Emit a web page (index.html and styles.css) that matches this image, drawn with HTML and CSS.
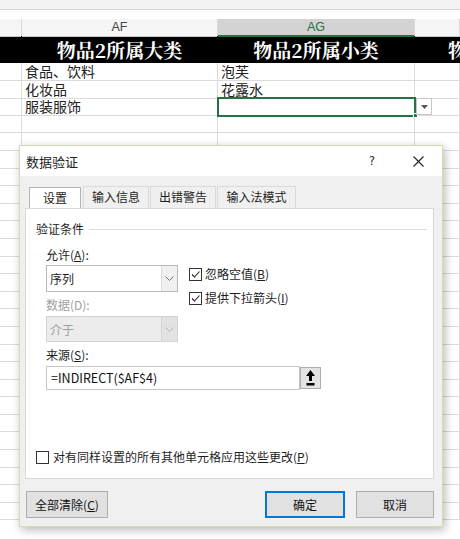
FILE: index.html
```html
<!DOCTYPE html>
<html lang="zh-CN">
<head>
<meta charset="utf-8">
<title>数据验证</title>
<link rel="stylesheet" href="styles.css">
</head>
<body>
<div class="sheet">
  <div class="topstrip"></div>
  <div class="blankstrip"></div>
  <div class="row colhdr"><div></div><div>AF</div><div class="sel">AG</div><div></div></div>
  <div class="row titlerow"><div></div><div>物品2所属大类</div><div>物品2所属小类</div><div class="clipcell">物品3所属大类</div></div>
  <div class="row"><div></div><div>食品、饮料</div><div>泡芙</div><div></div></div>
  <div class="row"><div></div><div>化妆品</div><div>花露水</div><div></div></div>
  <div class="row"><div></div><div>服装服饰</div><div class="active"><span class="handle"></span><span class="cell-dd"><svg width="7" height="4" viewBox="0 0 7 4"><path d="M0 0h7L3.5 4z" fill="#555"/></svg></span></div><div></div></div>
  <div class="row"><div></div><div></div><div></div><div></div></div>
  <div class="row"><div></div><div></div><div></div><div></div></div>
  <div class="row"><div></div><div></div><div></div><div></div></div>
  <div class="row"><div></div><div></div><div></div><div></div></div>
  <div class="row"><div></div><div></div><div></div><div></div></div>
  <div class="row"><div></div><div></div><div></div><div></div></div>
  <div class="row"><div></div><div></div><div></div><div></div></div>
  <div class="row"><div></div><div></div><div></div><div></div></div>
  <div class="row"><div></div><div></div><div></div><div></div></div>
  <div class="row"><div></div><div></div><div></div><div></div></div>
  <div class="row"><div></div><div></div><div></div><div></div></div>
  <div class="row"><div></div><div></div><div></div><div></div></div>
  <div class="row"><div></div><div></div><div></div><div></div></div>
  <div class="row"><div></div><div></div><div></div><div></div></div>
  <div class="row"><div></div><div></div><div></div><div></div></div>
  <div class="row"><div></div><div></div><div></div><div></div></div>
  <div class="row"><div></div><div></div><div></div><div></div></div>
  <div class="row"><div></div><div></div><div></div><div></div></div>
  <div class="row"><div></div><div></div><div></div><div></div></div>
  <div class="row"><div></div><div></div><div></div><div></div></div>
  <div class="row"><div></div><div></div><div></div><div></div></div>
  <div class="row"><div></div><div></div><div></div><div></div></div>
  <div class="row"><div></div><div></div><div></div><div></div></div>
</div>

<div class="dialog">
  <div class="titlebar">
    <span class="title">数据验证</span>
    <span class="help">?</span>
    <span class="close"><svg width="11" height="11" viewBox="0 0 11 11"><path d="M0.5 0.5L10.5 10.5M10.5 0.5L0.5 10.5" stroke="#222" stroke-width="1.1" fill="none"/></svg></span>
  </div>
  <div class="dbody">
    <div class="tabs">
      <div class="tab current">设置</div>
      <div class="tab t2">输入信息</div>
      <div class="tab t3">出错警告</div>
      <div class="tab t4">输入法模式</div>
    </div>
    <div class="panel">
      <div class="group-title"><span>验证条件</span><span class="rule"></span></div>
      <div class="cols">
        <div class="fields">
          <div class="lbl">允许(<u>A</u>):</div>
          <div class="select"><span class="val">序列</span><span class="arrow"><svg width="9" height="5" viewBox="0 0 9 5"><path d="M0.5 0.5L4.5 4.5L8.5 0.5" stroke="#777" stroke-width="1" fill="none"/></svg></span></div>
          <div class="lbl dim">数据(D):</div>
          <div class="select disabled"><span class="val">介于</span><span class="arrow"><svg width="9" height="5" viewBox="0 0 9 5"><path d="M0.5 0.5L4.5 4.5L8.5 0.5" stroke="#b5b5b5" stroke-width="1" fill="none"/></svg></span></div>
        </div>
        <div class="checks">
          <div class="check"><span class="box"><svg width="11" height="11" viewBox="0 0 11 11"><path d="M2 5.5L4.5 8L9.5 2.5" stroke="#222" stroke-width="1.1" fill="none"/></svg></span>忽略空值(<u>B</u>)</div>
          <div class="check"><span class="box"><svg width="11" height="11" viewBox="0 0 11 11"><path d="M2 5.5L4.5 8L9.5 2.5" stroke="#222" stroke-width="1.1" fill="none"/></svg></span>提供下拉箭头(<u>I</u>)</div>
        </div>
      </div>
      <div class="lbl src-lbl">来源(<u>S</u>):</div>
      <div class="source">
        <div class="input">=INDIRECT($AF$4)</div>
        <div class="pick"><svg width="9" height="17" viewBox="0 0 9 17"><path d="M4.5 0L9 6H6V11H3V6H0Z" fill="#000"/><rect x="0.5" y="13" width="8" height="2.5" fill="#000"/></svg></div>
      </div>
      <div class="check apply"><span class="box"></span>对有同样设置的所有其他单元格应用这些更改(<u>P</u>)</div>
    </div>
    <div class="buttons">
      <div class="btn clear">全部清除(<u>C</u>)</div>
      <div class="btn ok">确定</div>
      <div class="btn cancel">取消</div>
    </div>
  </div>
</div>
</body>
</html>
```

FILE: styles.css
```css
* { box-sizing: border-box; }
html, body { margin: 0; padding: 0; }
body {
  width: 460px;
  height: 539px;
  overflow: hidden;
  position: relative;
  background: #fff;
  font-family: "Noto Sans CJK SC", sans-serif;
}

/* ---------- spreadsheet ---------- */
.sheet { width: 460px; overflow: hidden; }
.topstrip { height: 10px; background: #f3f3f3; border-bottom: 1px solid #d6d6d6; }
.blankstrip { height: 9px; background: #fff; }

.row {
  display: grid;
  grid-template-columns: 22px 196px 197px 45px;
  height: 17.6px;
}
.row > div {
  position: relative;
  border-right: 1px solid #dadada;
  border-bottom: 1px solid #dadada;
  padding-left: 3px;
  font-size: 14px;
  line-height: 17px;
  color: #222;
  white-space: nowrap;
}

.colhdr { height: 17px; }
.colhdr > div {
  padding: 0;
  text-align: center;
  background: #f5f5f5;
  font-family: "Liberation Sans", sans-serif;
  font-size: 12.5px;
  line-height: 16px;
  color: #444;
  border-bottom: 1px solid #c8c8c8;
}
.colhdr > .sel {
  background: #d3d3d3;
  color: #217346;
  border-bottom: 2px solid #217346;
}

.titlerow { height: 27px; background: #000; }
.titlerow > div {
  padding: 0;
  text-align: center;
  color: #fff;
  font-family: "Noto Serif CJK SC", "Noto Sans CJK SC", serif;
  font-weight: bold;
  font-size: 19px;
  line-height: 27px;
  border-color: #000;
  overflow: hidden;
}
.titlerow > .clipcell {
  text-align: left;
  padding-left: 33px;
  border-right: none;
}

.row > .active {
  outline: 2px solid #217346;
  outline-offset: -1px;
  z-index: 1;
}
.handle {
  position: absolute;
  right: -4px;
  bottom: -3px;
  width: 5px;
  height: 5px;
  background: #217346;
  border: 1px solid #fff;
}
.cell-dd {
  position: absolute;
  left: 198px;
  top: 0;
  width: 16px;
  height: 17px;
  background: #fff;
  border: 1px solid #c6c6c6;
  display: flex;
  align-items: center;
  justify-content: center;
}

/* ---------- dialog ---------- */
.dialog {
  position: absolute;
  left: 19px;
  top: 145px;
  width: 424px;
  height: 382px;
  background: #f0f0f0;
  border: 1px solid #d9d9ad;
  box-shadow: 2px 3px 9px rgba(0, 0, 0, 0.28);
  display: flex;
  flex-direction: column;
  font-size: 12px;
  color: #1e1e1e;
}
.titlebar {
  height: 30px;
  background: #fff;
  display: flex;
  align-items: center;
  padding-left: 6px;
}
.title { flex: 1; font-size: 13px; color: #222; }
.help {
  width: 30px;
  margin-right: 8px;
  text-align: center;
  font-family: "DejaVu Sans", sans-serif;
  font-size: 12px;
  color: #333;
}
.close {
  width: 46px;
  margin-right: 1px;
  display: flex;
  justify-content: center;
}

.dbody {
  flex: 1;
  display: flex;
  flex-direction: column;
  padding: 10px 8px 0 5px;
}
.tabs { display: flex; height: 22px; padding-left: 4px; }
.tab {
  height: 22px;
  line-height: 20px;
  text-align: center;
  background: #f0f0f0;
  border: 1px solid #dadada;
  border-bottom: none;
  margin-left: -1px;
}
.tab.current {
  width: 52px;
  margin-left: 0;
  margin-top: 1px;
  height: 21px;
  background: #fff;
  border-color: #b4b4b4;
  line-height: 19px;
}
.t2 { width: 66px; margin-left: 2px; }
.t3 { width: 66px; margin-left: 1px; }
.t4 { width: 79px; margin-left: 1px; }

.panel {
  height: 271px;
  background: #fff;
  border: 1px solid #d9d9d9;
  display: flex;
  flex-direction: column;
  padding: 12px 6px 13px 10px;
}
.group-title {
  display: flex;
  align-items: center;
  height: 16px;
  line-height: 16px;
}
.rule { flex: 1; height: 1px; background: #dcdcdc; margin-left: 5px; }

.lbl { height: 16px; line-height: 16px; padding-left: 10px; }
.dim { color: #a0a0a0; }

.cols { display: flex; margin-top: 10px; }
.fields { width: 142px; }
.select {
  margin: 2px 0 0 10px;
  width: 132px;
  height: 27px;
  border: 1px solid #b9b9b9;
  background: #fff;
  display: flex;
}
.select .val { flex: 1; line-height: 25px; padding-left: 3px; }
.select .arrow {
  width: 16px;
  border-left: 1px solid #dcdcdc;
  background: #f0f0f0;
  display: flex;
  align-items: center;
  justify-content: center;
}
.fields .dim { margin-top: 5px; }
.select.disabled {
  margin-top: 3px;
  height: 26px;
  background: #ececec;
  border-color: #d2d2d2;
  color: #a0a0a0;
}
.select.disabled .arrow { background: #e2e2e2; border-left-color: #d6d6d6; }

.checks { margin-left: 11px; padding-top: 19px; }
.check {
  display: flex;
  align-items: center;
  height: 16px;
  line-height: 16px;
  margin-bottom: 8px;
}
.box {
  width: 13px;
  height: 13px;
  border: 1px solid #333;
  background: #fff;
  margin-right: 3px;
  display: flex;
  align-items: center;
  justify-content: center;
}

.src-lbl { margin-top: 5px; }
.source { display: flex; margin: 3px 0 0 10px; height: 24px; }
.input {
  width: 254px;
  border: 1px solid #c6c6c6;
  line-height: 22px;
  padding-left: 4px;
  font-size: 12.5px;
  color: #111;
}
.pick {
  width: 21px;
  margin-top: 1px;
  height: 22px;
  background: #e3e3e3;
  border: 1px solid #adadad;
  display: flex;
  align-items: center;
  justify-content: center;
}

.apply { margin-top: auto; margin-bottom: 0; }
.apply .box { margin-right: 4px; }

.buttons {
  display: flex;
  margin-top: 12px;
  height: 27px;
}
.btn {
  height: 27px;
  line-height: 25px;
  text-align: center;
  background: #e1e1e1;
  border: 1px solid #adadad;
  color: #111;
}
.clear { width: 82px; margin-left: 1px; }
.ok { width: 80px; margin-left: auto; border: 2px solid #0078d7; line-height: 23px; }
.cancel { width: 78px; margin-left: 11px; }
```
